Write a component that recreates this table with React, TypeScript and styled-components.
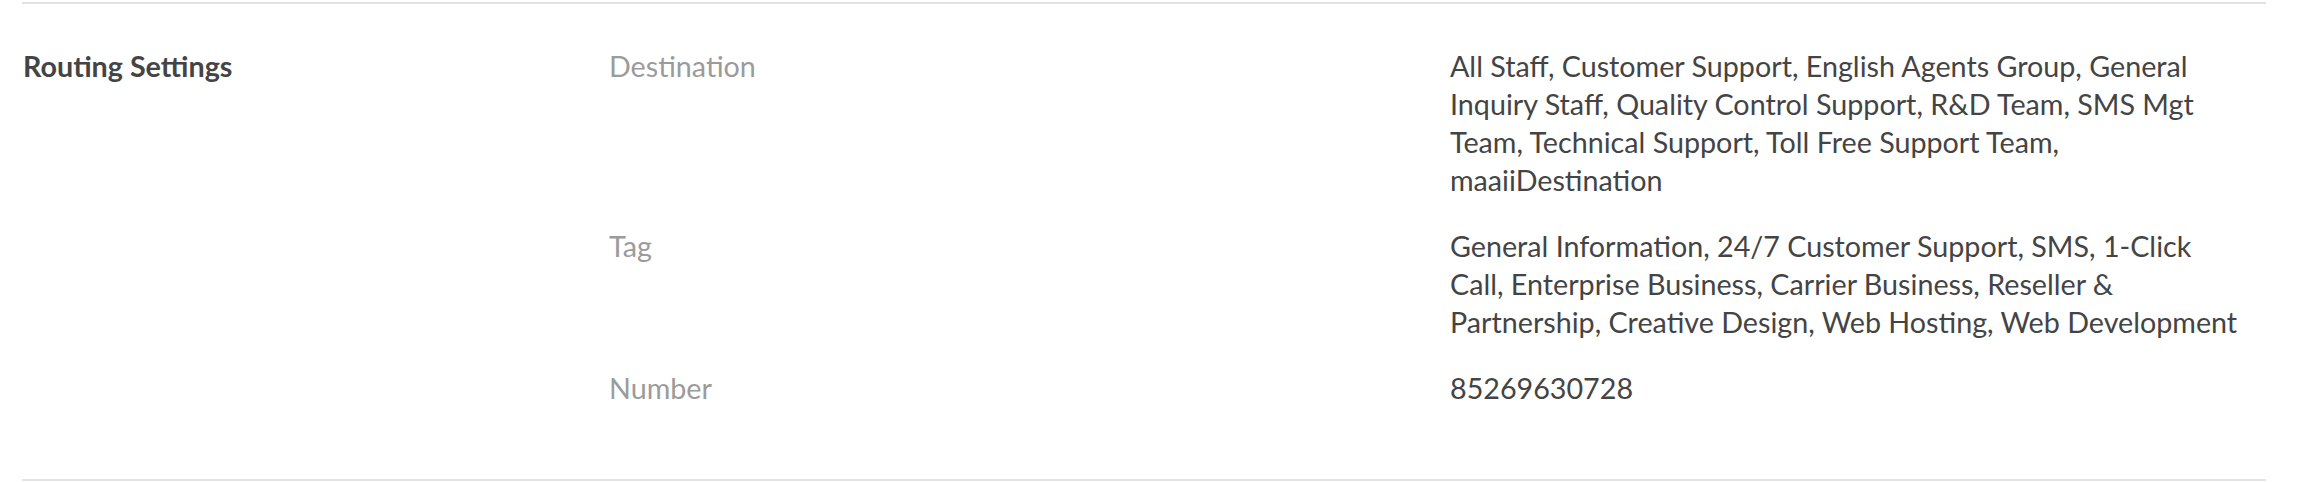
import React from 'react';
import styled, { createGlobalStyle } from 'styled-components';

const GlobalStyle = createGlobalStyle`
  html, body {
    margin: 0;
    padding: 0;
    background: #fff;
  }
  body {
    font-family: Lato, "Open Sans", sans-serif;
    color: #444;
  }
`;

const Page = styled.div`
  padding: 2px 42px 0 22px;
`;

const Section = styled.section`
  display: flex;
  border-top: 2px solid #e2e2e2;
  border-bottom: 2px solid #e2e2e2;
  padding: 43px 0 72px;
`;

const Title = styled.h3`
  flex: 0 0 586px;
  margin: 0;
  padding-left: 1px;
  font-size: 28.7px;
  font-weight: 700;
  line-height: 38px;
  color: #444;
`;

const Details = styled.dl`
  flex: 1;
  margin: 0;
  display: grid;
  grid-template-columns: 841px 1fr;
  row-gap: 28px;
`;

const Label = styled.dt`
  margin: 0;
  font-size: 28.7px;
  line-height: 38px;
  color: #9b9b9b;
`;

const Value = styled.dd`
  margin: 0;
  padding-right: 26px;
  font-size: 28.7px;
  line-height: 38px;
  color: #444;
`;

const rows = [
  {
    label: 'Destination',
    value:
      'All Staff, Customer Support, English Agents Group, General Inquiry Staff, Quality Control Support, R&D Team, SMS Mgt Team, Technical Support, Toll Free Support Team, maaiiDestination',
  },
  {
    label: 'Tag',
    value:
      'General Information, 24/7 Customer Support, SMS, 1-Click Call, Enterprise Business, Carrier Business, Reseller & Partnership, Creative Design, Web Hosting, Web Development',
  },
  { label: 'Number', value: '85269630728' },
];

const App: React.FC = () => (
  <Page>
    <GlobalStyle />
    <Section>
      <Title>Routing Settings</Title>
      <Details>
        {rows.map((row) => (
          <React.Fragment key={row.label}>
            <Label>{row.label}</Label>
            <Value>{row.value}</Value>
          </React.Fragment>
        ))}
      </Details>
    </Section>
  </Page>
);

export default App;
